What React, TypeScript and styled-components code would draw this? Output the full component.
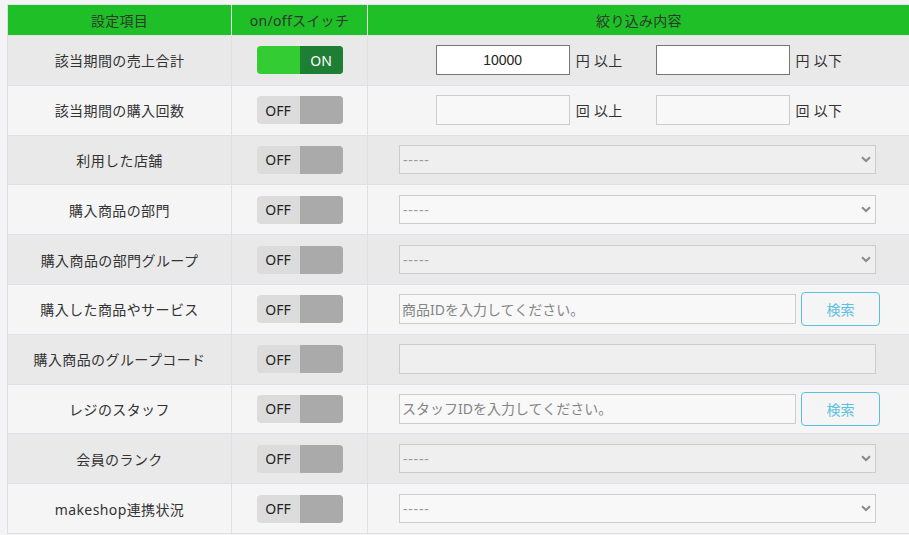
import React from "react";
import styled, { createGlobalStyle } from "styled-components";

const GlobalStyle = createGlobalStyle`
  html, body {
    margin: 0;
    padding: 0;
    background: #f4f4f6;
  }
  body {
    font-family: "Noto Sans", "Noto Sans CJK JP", sans-serif;
    color: #333;
  }
`;

const Page = styled.div`
  padding: 4px 2px 0 7px;
`;

const Table = styled.table`
  width: 900px;
  border-collapse: collapse;
  table-layout: fixed;
  border: 1px solid #dde0e4;
  font-size: 14px;
`;

const HeadCell = styled.th<{ $w: number }>`
  width: ${(p) => p.$w}px;
  height: 30px;
  padding: 0;
  background: #1fbf28;
  color: #2c3a2c;
  font-weight: normal;
  font-size: 14px;
  letter-spacing: 0.3px;
  border-left: 1px solid #e6f5e6;
  &:first-child {
    border-left: none;
  }
`;

const Row = styled.tr<{ $odd: boolean }>`
  background: ${(p) => (p.$odd ? "#e9e9e9" : "#f5f5f5")};
`;

const Cell = styled.td`
  height: 48.8px;
  padding: 0;
  border: 1px solid #dde0e4;
  text-align: center;
  vertical-align: middle;
  letter-spacing: 0.4px;
`;

const FilterCell = styled(Cell)`
  text-align: left;
  padding-left: 31px;
  letter-spacing: 0;
`;

const Toggle = styled.div<{ $on: boolean }>`
  display: inline-flex;
  width: 86px;
  height: 28px;
  border-radius: 4px;
  overflow: hidden;
  vertical-align: middle;
  letter-spacing: 0;
  background: ${(p) => (p.$on ? "#33cc33" : "#dcdcdc")};
`;

const ToggleHalf = styled.span<{ $dark: boolean; $on: boolean }>`
  flex: 1;
  display: flex;
  align-items: center;
  justify-content: center;
  font-size: 14px;
  color: ${(p) => (p.$on ? "#fff" : "#222")};
  background: ${(p) =>
    p.$dark ? (p.$on ? "#1e7e34" : "#aaaaaa") : "transparent"};
`;

const RangeWrap = styled.div`
  display: flex;
  align-items: center;
  justify-content: center;
  letter-spacing: 0;
`;

const RangeInput = styled.input<{ $active: boolean }>`
  box-sizing: border-box;
  width: 134px;
  height: 30px;
  border: 1px solid ${(p) => (p.$active ? "#777" : "#cccccc")};
  background: ${(p) => (p.$active ? "#fff" : "rgba(255,255,255,0.3)")};
  text-align: center;
  font-family: "Liberation Sans", Arial, sans-serif;
  font-size: 14px;
  color: #222;
  outline: none;
`;

const Unit = styled.span`
  margin: 0 33px 0 6px;
  font-size: 14px;
  color: #333;
  letter-spacing: 0.3px;
  &:last-child {
    margin-right: 0;
  }
`;

const SelectWrap = styled.div`
  position: relative;
  width: 477px;
`;

const Select = styled.select`
  box-sizing: border-box;
  width: 100%;
  height: 29px;
  appearance: none;
  border: 1px solid #cccccc;
  background: rgba(255, 255, 255, 0.3);
  color: #999;
  font-family: "Noto Sans", "Noto Sans CJK JP", sans-serif;
  font-size: 14px;
  letter-spacing: 0.8px;
  padding: 0 3px;
  outline: none;
`;

const Chevron = styled.svg`
  position: absolute;
  right: 5px;
  top: 11px;
  pointer-events: none;
`;

const SearchWrap = styled.div`
  display: flex;
  align-items: center;
  gap: 5px;
`;

const TextInput = styled.input<{ $w: number }>`
  box-sizing: border-box;
  width: ${(p) => p.$w}px;
  height: 30px;
  border: 1px solid #cccccc;
  background: rgba(255, 255, 255, 0.3);
  font-family: "Noto Sans", "Noto Sans CJK JP", sans-serif;
  font-size: 14px;
  padding: 0 2px;
  color: #333;
  outline: none;
  &::placeholder {
    color: #858585;
  }
`;

const SearchButton = styled.button`
  box-sizing: border-box;
  width: 79px;
  height: 34px;
  border: 1px solid #5bc0de;
  border-radius: 4px;
  background: transparent;
  color: #5bc0de;
  font-family: "Noto Sans", "Noto Sans CJK JP", sans-serif;
  font-size: 14px;
`;

type Filter =
  | { kind: "range"; unit: string; value?: string }
  | { kind: "select" }
  | { kind: "search"; placeholder: string }
  | { kind: "text" };

type Item = { label: string; on: boolean; filter: Filter };

const items: Item[] = [
  { label: "該当期間の売上合計", on: true, filter: { kind: "range", unit: "円", value: "10000" } },
  { label: "該当期間の購入回数", on: false, filter: { kind: "range", unit: "回" } },
  { label: "利用した店舗", on: false, filter: { kind: "select" } },
  { label: "購入商品の部門", on: false, filter: { kind: "select" } },
  { label: "購入商品の部門グループ", on: false, filter: { kind: "select" } },
  { label: "購入した商品やサービス", on: false, filter: { kind: "search", placeholder: "商品IDを入力してください。" } },
  { label: "購入商品のグループコード", on: false, filter: { kind: "text" } },
  { label: "レジのスタッフ", on: false, filter: { kind: "search", placeholder: "スタッフIDを入力してください。" } },
  { label: "会員のランク", on: false, filter: { kind: "select" } },
  { label: "makeshop連携状況", on: false, filter: { kind: "select" } },
];

const renderFilter = (f: Filter, on: boolean) => {
  switch (f.kind) {
    case "range":
      return (
        <RangeWrap>
          <RangeInput $active={on} defaultValue={f.value ?? ""} />
          <Unit>{f.unit} 以上</Unit>
          <RangeInput $active={on} />
          <Unit>{f.unit} 以下</Unit>
        </RangeWrap>
      );
    case "select":
      return (
        <SelectWrap>
          <Select defaultValue="">
            <option value="">-----</option>
          </Select>
          <Chevron width="10" height="7" viewBox="0 0 10 7">
            <path d="M1 1.2 L5 5 L9 1.2" fill="none" stroke="#8a8a8a" strokeWidth="2" />
          </Chevron>
        </SelectWrap>
      );
    case "search":
      return (
        <SearchWrap>
          <TextInput $w={397} placeholder={f.placeholder} />
          <SearchButton>検索</SearchButton>
        </SearchWrap>
      );
    default:
      return <TextInput $w={477} />;
  }
};

const App: React.FC = () => {
  return (
    <Page>
      <GlobalStyle />
      <Table>
        <thead>
          <tr>
            <HeadCell $w={223}>設定項目</HeadCell>
            <HeadCell $w={135}>on/offスイッチ</HeadCell>
            <HeadCell $w={542}>絞り込み内容</HeadCell>
          </tr>
        </thead>
        <tbody>
          {items.map((item, i) => (
            <Row key={item.label} $odd={i % 2 === 0}>
              <Cell>{item.label}</Cell>
              <Cell>
                <Toggle $on={item.on}>
                  <ToggleHalf $dark={false} $on={item.on}>
                    {item.on ? "" : "OFF"}
                  </ToggleHalf>
                  <ToggleHalf $dark={true} $on={item.on}>
                    {item.on ? "ON" : ""}
                  </ToggleHalf>
                </Toggle>
              </Cell>
              {item.filter.kind === "range" ? (
                <Cell>{renderFilter(item.filter, item.on)}</Cell>
              ) : (
                <FilterCell>{renderFilter(item.filter, item.on)}</FilterCell>
              )}
            </Row>
          ))}
        </tbody>
      </Table>
    </Page>
  );
};

export default App;
